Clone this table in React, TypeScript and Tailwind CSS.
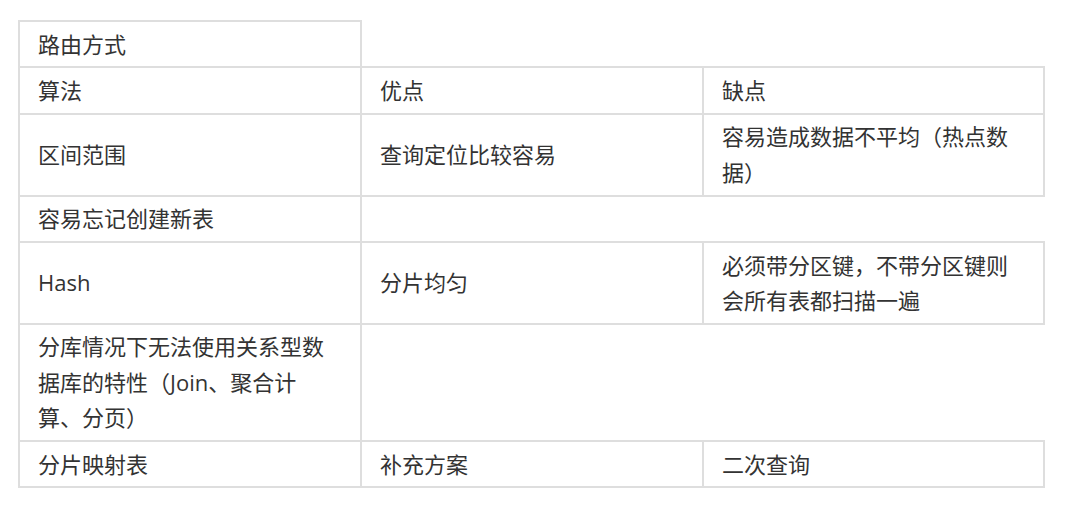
const rows: string[][] = [
  ["路由方式"],
  ["算法", "优点", "缺点"],
  ["区间范围", "查询定位比较容易", "容易造成数据不平均（热点数据）"],
  ["容易忘记创建新表"],
  ["Hash", "分片均匀", "必须带分区键，不带分区键则会所有表都扫描一遍"],
  ["分库情况下无法使用关系型数据库的特性（Join、聚合计算、分页）"],
  ["分片映射表", "补充方案", "二次查询"],
];

export default function App() {
  return (
    <div className="w-[1080px] h-[505px] bg-white pl-[18px] pt-[20px] font-['Open_Sans','Noto_Sans_CJK_SC',sans-serif] text-[22px] leading-[35.4px] text-[#333333]">
      <table className="w-[1025px] table-fixed border-collapse">
        <colgroup>
          <col className="w-[342px]" />
          <col className="w-[342px]" />
          <col className="w-[341px]" />
        </colgroup>
        <tbody>
          {rows.map((row, i) => (
            <tr key={i}>
              {row.map((cell, j) => (
                <td
                  key={j}
                  className="border-2 border-[#dedede] pl-[18px] pr-[24px] py-[4.5px] align-middle break-words"
                >
                  {cell}
                </td>
              ))}
            </tr>
          ))}
        </tbody>
      </table>
    </div>
  );
}
